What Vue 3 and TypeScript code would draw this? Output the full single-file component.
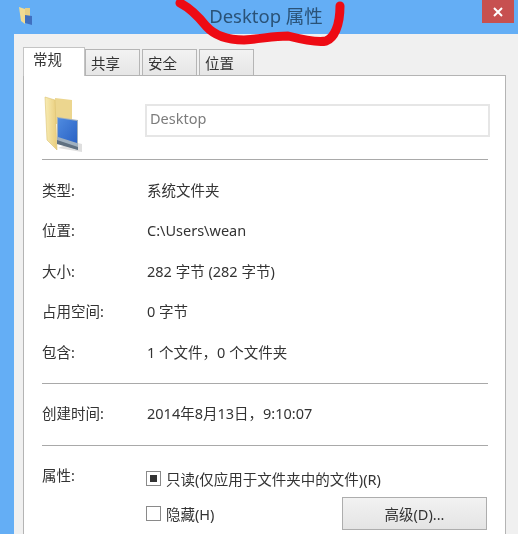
<script setup lang="ts">
const group1 = [
  { label: '类型:', value: '系统文件夹' },
  { label: '位置:', value: 'C:\\Users\\wean' },
  { label: '大小:', value: '282 字节 (282 字节)' },
  { label: '占用空间:', value: '0 字节' },
  { label: '包含:', value: '1 个文件，0 个文件夹' },
]
const tabs = ['共享', '安全', '位置']
</script>

<template>
  <div class="window">
    <header class="titlebar">
      <svg class="app-icon" width="16" height="20" viewBox="0 0 16 20">
        <path d="M1 1 L7 3 V18 L3 15 Z" fill="#f1dc93" />
        <path d="M7 2 H12 V10 H7 Z" fill="#e6cf85" />
        <path d="M7 9 L14 10 V19 L7 17 Z" fill="#3f6fc0" />
      </svg>
      <h1 class="title">Desktop 属性</h1>
      <button class="close">
        <svg width="10" height="10" viewBox="0 0 10 10">
          <path d="M1 1 L9 9 M9 1 L1 9" stroke="#fff" stroke-width="2" fill="none" />
        </svg>
      </button>
    </header>

    <div class="body">
      <nav class="tabs">
        <span class="tab active">常规</span>
        <span v-for="t in tabs" :key="t" class="tab">{{ t }}</span>
      </nav>
      <section class="panel">
        <div class="head">
          <svg class="folder" width="44" height="60" viewBox="0 0 44 60">
            <defs>
              <linearGradient id="fl" x1="0" x2="1" y1="0" y2="0">
                <stop offset="0" stop-color="#f8ecb4" />
                <stop offset="1" stop-color="#e9cd7c" />
              </linearGradient>
              <linearGradient id="sc" x1="0" x2="1" y1="0" y2="1">
                <stop offset="0" stop-color="#4f8be0" />
                <stop offset="1" stop-color="#2a62c4" />
              </linearGradient>
            </defs>
            <path d="M14 54 L38 58 L38 50 L30 48 Z" fill="#dfdfdf" />
            <path d="M11 4 L28 6 V30 H11 Z" fill="#ecd68f" />
            <path d="M1 3 L11 6 L13 56 L3 46 Z" fill="url(#fl)" stroke="#dcc272" stroke-width="0.6" />
            <path d="M13 23 L34 26 V56 L13 49 Z" fill="#9fb0bf" />
            <path d="M14 24 L33 27 V49 L14 43 Z" fill="url(#sc)" />
            <path d="M13 46 L34 53 V56 L13 50 Z" fill="#5f7080" />
          </svg>
          <div class="name">Desktop</div>
        </div>
        <hr class="sep first" />
        <dl class="rows">
          <div v-for="r in group1" :key="r.label" class="row">
            <dt>{{ r.label }}</dt>
            <dd>{{ r.value }}</dd>
          </div>
        </dl>
        <hr class="sep" />
        <div class="row single">
          <dt>创建时间:</dt>
          <dd>2014年8月13日，9:10:07</dd>
        </div>
        <hr class="sep" />
        <div class="attrs">
          <div class="attr-label">属性:</div>
          <div class="attr-main">
            <label class="check"><span class="box on"></span>只读(仅应用于文件夹中的文件)(R)</label>
            <div class="attr-second">
              <label class="check"><span class="box"></span>隐藏(H)</label>
              <button class="advanced">高级(D)...</button>
            </div>
          </div>
        </div>
      </section>
    </div>

    <svg class="scribble" width="518" height="50" viewBox="0 0 518 50">
      <path
        d="M180 3 C190 8 198 16 206 26 C214 35 226 40 244 40 C262 39 272 36 288 36 C300 39 316 43 326 41 C334 38 340 26 340 6"
        stroke="#ee0b14" stroke-width="9" fill="none" stroke-linecap="round" stroke-linejoin="round"
      />
    </svg>
  </div>
</template>

<style>
html, body { margin: 0; background: #64aef5; }
</style>

<style scoped>
.window {
  position: relative;
  width: 518px;
  height: 534px;
  overflow: hidden;
  background: #64aef5;
  font-family: "Noto Sans", "Noto Sans CJK SC", sans-serif;
  font-size: 14.5px;
  color: #333;
  display: flex;
  flex-direction: column;
  filter: blur(0.35px);
}
.titlebar {
  height: 34px;
  flex: none;
  display: flex;
  align-items: flex-start;
  position: relative;
}
.app-icon { margin: 6px 0 0 18px; }
.title {
  position: absolute;
  left: 14px;
  right: 0;
  top: 4px;
  margin: 0;
  text-align: center;
  font-size: 18.5px;
  line-height: 24px;
  font-weight: 400;
  color: #2a5277;
}
.close {
  position: absolute;
  top: 0;
  right: 4px;
  width: 32px;
  height: 23px;
  border: 0;
  padding: 0;
  background: #c75050;
  display: flex;
  align-items: center;
  justify-content: center;
}
.body {
  flex: 1;
  margin-left: 14px;
  background: #f0f0f0;
  padding: 13px 12px 0 9px;
  display: flex;
  flex-direction: column;
}
.tabs {
  display: flex;
  height: 28px;
  align-items: flex-end;
  position: relative;
  z-index: 1;
}
.tab {
  width: 55px;
  height: 26px;
  margin-right: 2px;
  box-sizing: border-box;
  border: 1px solid #b5b5b5;
  border-bottom: 0;
  background: linear-gradient(#f2f2f2, #e6e6e6);
  text-align: left;
  padding-left: 5px;
  line-height: 26px;
  color: #333;
}
.tab.active {
  width: 62px;
  height: 29px;
  margin-bottom: -1px;
  margin-right: 0;
  background: #fff;
  border-color: #c4c4c4;
  line-height: 22px;
  padding-left: 9px;
}
.panel {
  flex: 1;
  background: #fff;
  border: 1px solid #b4b4b4;
  border-bottom: 0;
  padding: 19px 17px 0 18px;
  display: flex;
  flex-direction: column;
}
.head {
  display: flex;
  height: 64px;
}
.folder { margin-top: -1px; margin-left: 2px; }
.name {
  margin: 9px -2px 0 57px;
  flex: 1;
  height: 33px;
  box-sizing: border-box;
  border: 2px solid #e6e6e6;
  padding-left: 3px;
  line-height: 25px;
  font-size: 14.5px;
  color: #7c7c7c;
}
.sep {
  margin: 0;
  height: 0;
  border: 0;
  border-top: 1px solid #a9a9a9;
  flex: none;
}
.rows { margin: 0; padding: 9px 0 11px; }
.row {
  display: flex;
  height: 40.5px;
  align-items: center;
}
dt { width: 105px; margin: 0; flex: none; }
dd { margin: 0; }
.row.single { height: 61px; box-sizing: border-box; padding-bottom: 3px; }
.attrs {
  display: flex;
  padding-top: 18px;
}
.attr-label { width: 105px; flex: none; }
.attr-main { flex: 1; padding-top: 5px; }
.check { display: flex; align-items: center; height: 20px; }
.box {
  width: 13px;
  height: 13px;
  margin: 0 5px 0 -1px;
  border: 1px solid #8a8a8a;
  background: #fff;
  display: flex;
  align-items: center;
  justify-content: center;
}
.box.on::before {
  content: "";
  width: 7px;
  height: 7px;
  background: #333;
}
.attr-second {
  display: flex;
  justify-content: space-between;
  align-items: flex-start;
  margin-top: 8px;
}
.attr-second .check { margin-top: 7px; }
.advanced {
  width: 145px;
  height: 33px;
  margin: 0 1px 0 0;
  border: 1px solid #adadad;
  background: linear-gradient(#f2f2f2, #e4e4e4);
  font: inherit;
  color: #333;
}
.scribble {
  position: absolute;
  left: 0;
  top: 0;
  pointer-events: none;
}
</style>
